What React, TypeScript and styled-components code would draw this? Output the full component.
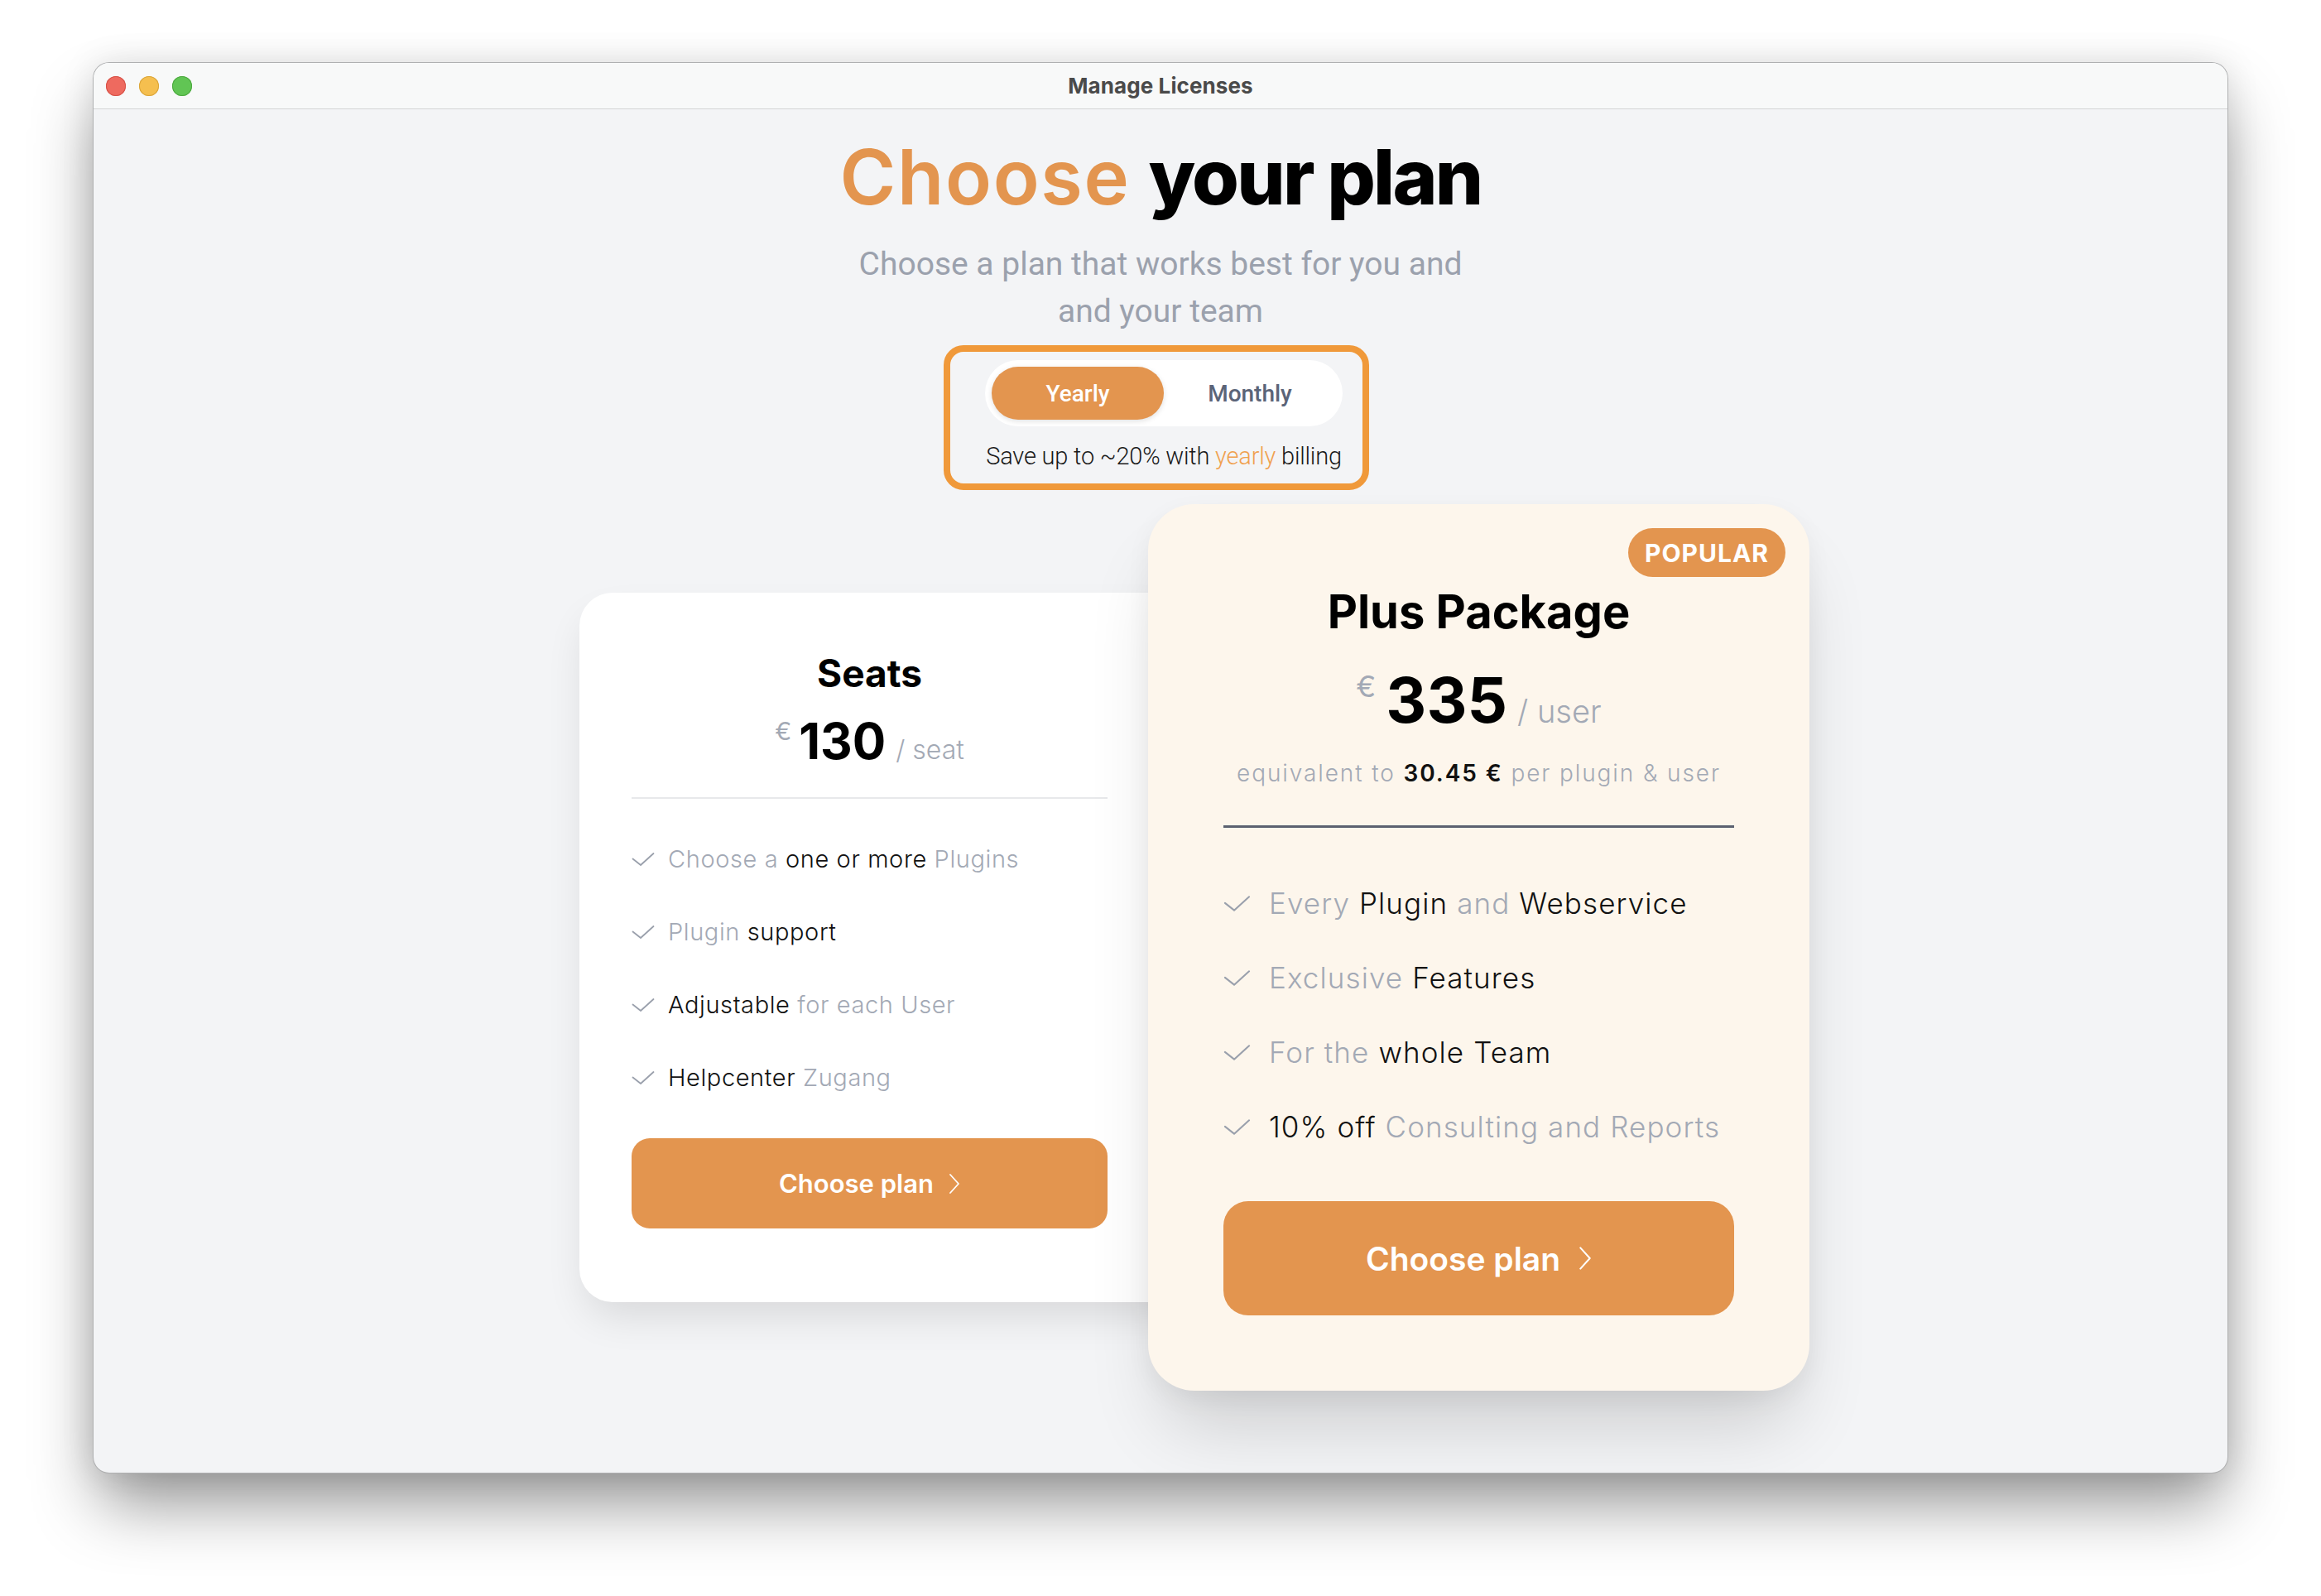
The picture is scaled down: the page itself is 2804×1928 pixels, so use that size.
import React from 'react';
import styled, { createGlobalStyle } from 'styled-components';

const ORANGE = '#e3954f';
const MUTED = '#a3a9b5';
const INK = '#111111';

const GlobalStyle = createGlobalStyle`
  html, body { margin: 0; padding: 0; background: #ffffff; }
  body { font-family: Inter, "Noto Sans", sans-serif; -webkit-font-smoothing: antialiased; }
  *, *::before, *::after { box-sizing: border-box; }
`;

const Stage = styled.div`
  width: 2804px;
  height: 1928px;
  display: flex;
  justify-content: center;
  align-items: flex-start;
  padding-top: 75px;
  background: #ffffff;
`;

const Window = styled.div`
  width: 2580px;
  height: 1705px;
  border-radius: 20px;
  background: #f3f4f6;
  border: 1px solid rgba(0, 0, 0, 0.28);
  box-shadow: 0 44px 80px -8px rgba(0, 0, 0, 0.42), 0 0 40px rgba(0, 0, 0, 0.1);
  overflow: hidden;
  display: flex;
  flex-direction: column;
`;

const TitleBar = styled.header`
  height: 56px;
  flex: none;
  background: #f8f9f9;
  border-bottom: 1px solid #d5d5d5;
  display: grid;
  grid-template-columns: 1fr auto 1fr;
  align-items: center;
  padding: 0 15px;
`;

const Lights = styled.div`
  display: flex;
  gap: 16px;
`;

const Light = styled.span<{ $fill: string; $edge: string }>`
  width: 24px;
  height: 24px;
  border-radius: 50%;
  background: ${(p) => p.$fill};
  box-shadow: inset 0 0 0 1px ${(p) => p.$edge};
`;

const WindowTitle = styled.div`
  font-size: 26px;
  font-weight: 700;
  color: #4a4a4a;
  letter-spacing: 0.1px;
`;

const Content = styled.main`
  flex: 1;
  display: flex;
  flex-direction: column;
  align-items: center;
`;

const Heading = styled.h1`
  margin: 36px 0 0;
  font-size: 92px;
  line-height: 1;
  font-weight: 800;
  letter-spacing: -0.03em;
  color: #000000;
`;

const Accent = styled.span`
  color: ${ORANGE};
  font-weight: 600;
  letter-spacing: 0.018em;
  margin-right: 0.05em;
`;

const Subtitle = styled.p`
  margin: 31px 0 0;
  font-family: Roboto, "Liberation Sans", sans-serif;
  font-size: 39px;
  line-height: 57px;
  color: #9ba1ad;
  text-align: center;
  letter-spacing: 0;
`;

const BillingBox = styled.div`
  margin: 12px 10px 0 0;
  border: 8px solid #f0993a;
  border-radius: 24px;
  padding: 10px 24px 15px 42px;
  display: flex;
  flex-direction: column;
  align-items: center;
  gap: 18px;
`;

const Toggle = styled.div`
  width: 432px;
  height: 80px;
  padding: 8px;
  border-radius: 40px;
  background: #ffffff;
  display: flex;
`;

const ToggleOption = styled.button<{ $active?: boolean }>`
  flex: 1;
  border: 0;
  border-radius: 32px;
  font-family: Roboto, "Liberation Sans", sans-serif;
  font-size: 28px;
  font-weight: 500;
  background: ${(p) => (p.$active ? ORANGE : 'transparent')};
  color: ${(p) => (p.$active ? '#ffffff' : '#5b6478')};
  box-shadow: ${(p) => (p.$active ? '0 2px 6px rgba(0,0,0,0.12)' : 'none')};
  cursor: pointer;
`;

const SaveNote = styled.p`
  margin: 0;
  font-family: Roboto, "Liberation Sans", sans-serif;
  font-size: 29px;
  line-height: 36px;
  font-weight: 300;
  color: #1a1a1a;
  letter-spacing: -0.2px;
  white-space: nowrap;
`;

const Highlight = styled.span`
  color: #f0a14f;
`;

const Plans = styled.div`
  margin-top: 17px;
  padding-left: 82px;
  display: flex;
  align-items: center;
`;

const Card = styled.section<{ $featured?: boolean }>`
  position: relative;
  z-index: ${(p) => (p.$featured ? 1 : 0)};
  width: ${(p) => (p.$featured ? 799 : 741)}px;
  margin-left: ${(p) => (p.$featured ? -54 : 0)}px;
  padding: ${(p) => (p.$featured ? '96px 91px 91px' : '69px 103px 89px 63px')};
  border-radius: ${(p) => (p.$featured ? 56 : 40)}px;
  background: ${(p) => (p.$featured ? '#fdf6ec' : '#ffffff')};
  box-shadow: ${(p) =>
    p.$featured
      ? '0 60px 90px -20px rgba(0,0,0,0.16), 0 10px 30px rgba(0,0,0,0.05)'
      : '0 24px 50px -10px rgba(0,0,0,0.12)'};
  display: flex;
  flex-direction: column;
`;

const Badge = styled.span`
  position: absolute;
  top: 29px;
  right: 29px;
  height: 59px;
  padding: 0 20px;
  border-radius: 30px;
  background: ${ORANGE};
  color: #ffffff;
  font-size: 30px;
  font-weight: 700;
  letter-spacing: 1px;
  display: flex;
  align-items: center;
`;

const PlanName = styled.h2<{ $featured?: boolean }>`
  margin: 0;
  text-align: center;
  font-size: ${(p) => (p.$featured ? 56 : 46)}px;
  line-height: ${(p) => (p.$featured ? 68 : 56)}px;
  font-weight: 700;
  color: #000000;
`;

const PriceRow = styled.div<{ $featured?: boolean }>`
  margin-top: ${(p) => (p.$featured ? 34 : 24)}px;
  display: flex;
  justify-content: center;
  align-items: baseline;
`;

const Currency = styled.span<{ $featured?: boolean }>`
  align-self: flex-start;
  margin: ${(p) => (p.$featured ? '4px 12px 0 0' : '3px 9px 0 0')};
  font-size: ${(p) => (p.$featured ? 36 : 30)}px;
  line-height: 1;
  font-weight: 400;
  color: ${MUTED};
`;

const Amount = styled.span<{ $featured?: boolean }>`
  font-size: ${(p) => (p.$featured ? 76 : 60)}px;
  line-height: 1;
  font-weight: 700;
  color: #000000;
`;

const Unit = styled.span<{ $featured?: boolean }>`
  margin-left: 12px;
  font-size: ${(p) => (p.$featured ? 38 : 32)}px;
  font-weight: 300;
  color: ${MUTED};
`;

const Equivalent = styled.p`
  margin: 31px 0 0;
  text-align: center;
  font-size: 28px;
  line-height: 40px;
  font-weight: 300;
  letter-spacing: 1.9px;
  color: ${MUTED};
  white-space: nowrap;
`;

const Strong = styled.strong`
  font-weight: 600;
  color: ${INK};
`;

const Divider = styled.hr<{ $featured?: boolean }>`
  margin: ${(p) => (p.$featured ? 43 : 38)}px 0 0;
  border: 0;
  height: ${(p) => (p.$featured ? 3 : 2)}px;
  background: ${(p) => (p.$featured ? '#5b6170' : '#e7e8eb')};
`;

const FeatureList = styled.ul<{ $featured?: boolean }>`
  list-style: none;
  margin: ${(p) => (p.$featured ? 67 : 53)}px 0 0;
  padding: 0;
  display: flex;
  flex-direction: column;
  gap: ${(p) => (p.$featured ? 42 : 48)}px;
`;

const Feature = styled.li<{ $featured?: boolean }>`
  display: flex;
  align-items: center;
  gap: ${(p) => (p.$featured ? 22 : 16)}px;
  font-size: ${(p) => (p.$featured ? 35 : 29)}px;
  line-height: ${(p) => (p.$featured ? 48 : 40)}px;
  font-weight: 300;
  letter-spacing: ${(p) => (p.$featured ? 1.1 : 0.6)}px;
  white-space: nowrap;
`;

const Part = styled.span<{ $tone: 'muted' | 'strong' }>`
  color: ${(p) => (p.$tone === 'muted' ? MUTED : INK)};
`;

const CheckIcon = styled.svg<{ $featured?: boolean }>`
  flex: none;
  width: ${(p) => (p.$featured ? 33 : 28)}px;
  height: ${(p) => (p.$featured ? 21 : 18)}px;
`;

const ChooseButton = styled.button<{ $featured?: boolean }>`
  margin-top: ${(p) => (p.$featured ? 66 : 53)}px;
  height: ${(p) => (p.$featured ? 138 : 109)}px;
  border: 0;
  border-radius: ${(p) => (p.$featured ? 30 : 22)}px;
  background: ${ORANGE};
  color: #ffffff;
  font-family: Inter, "Noto Sans", sans-serif;
  font-size: ${(p) => (p.$featured ? 39 : 31)}px;
  font-weight: 600;
  display: flex;
  align-items: center;
  justify-content: center;
  gap: ${(p) => (p.$featured ? 22 : 18)}px;
  cursor: pointer;
`;

const Chevron = styled.svg<{ $featured?: boolean }>`
  width: ${(p) => (p.$featured ? 16 : 14)}px;
  height: ${(p) => (p.$featured ? 30 : 26)}px;
`;

type Seg = [string, 'muted' | 'strong'];

const seatFeatures: Seg[][] = [
  [['Choose a', 'muted'], ['one or more', 'strong'], ['Plugins', 'muted']],
  [['Plugin', 'muted'], ['support', 'strong']],
  [['Adjustable', 'strong'], ['for each User', 'muted']],
  [['Helpcenter', 'strong'], ['Zugang', 'muted']],
];

const plusFeatures: Seg[][] = [
  [['Every', 'muted'], ['Plugin', 'strong'], ['and', 'muted'], ['Webservice', 'strong']],
  [['Exclusive', 'muted'], ['Features', 'strong']],
  [['For the', 'muted'], ['whole Team', 'strong']],
  [['10% off', 'strong'], ['Consulting and Reports', 'muted']],
];

function Check({ featured }: { featured?: boolean }) {
  return (
    <CheckIcon $featured={featured} viewBox="0 0 28 18" fill="none">
      <polyline
        points="1.5,8.5 11,16 26.5,2"
        stroke="#9aa0ac"
        strokeWidth="1.8"
        strokeLinecap="round"
        strokeLinejoin="round"
      />
    </CheckIcon>
  );
}

function Features({ items, featured }: { items: Seg[][]; featured?: boolean }) {
  return (
    <FeatureList $featured={featured}>
      {items.map((segs, i) => (
        <Feature key={i} $featured={featured}>
          <Check featured={featured} />
          <span>
            {segs.map(([text, tone], j) => (
              <React.Fragment key={j}>
                {j > 0 ? ' ' : ''}
                <Part $tone={tone}>{text}</Part>
              </React.Fragment>
            ))}
          </span>
        </Feature>
      ))}
    </FeatureList>
  );
}

function PlanButton({ featured }: { featured?: boolean }) {
  return (
    <ChooseButton $featured={featured}>
      Choose plan
      <Chevron $featured={featured} viewBox="0 0 14 26" fill="none">
        <polyline points="2,2 12,13 2,24" stroke="#ffffff" strokeWidth="1.8" strokeLinecap="round" strokeLinejoin="round" />
      </Chevron>
    </ChooseButton>
  );
}

export default function App() {
  return (
    <>
      <GlobalStyle />
      <Stage>
        <Window>
          <TitleBar>
            <Lights>
              <Light $fill="#ee6a5f" $edge="#d55147" />
              <Light $fill="#f5bf4f" $edge="#d9a43a" />
              <Light $fill="#61c554" $edge="#4ca83f" />
            </Lights>
            <WindowTitle>Manage Licenses</WindowTitle>
            <div />
          </TitleBar>
          <Content>
            <Heading>
              <Accent>Choose</Accent> your plan
            </Heading>
            <Subtitle>
              Choose a plan that works best for you and
              <br />
              and your team
            </Subtitle>
            <BillingBox>
              <Toggle>
                <ToggleOption $active>Yearly</ToggleOption>
                <ToggleOption>Monthly</ToggleOption>
              </Toggle>
              <SaveNote>
                Save up to ~20% with <Highlight>yearly</Highlight> billing
              </SaveNote>
            </BillingBox>
            <Plans>
              <Card>
                <PlanName>Seats</PlanName>
                <PriceRow>
                  <Currency>€</Currency>
                  <Amount>130</Amount>
                  <Unit>/ seat</Unit>
                </PriceRow>
                <Divider />
                <Features items={seatFeatures} />
                <PlanButton />
              </Card>
              <Card $featured>
                <Badge>POPULAR</Badge>
                <PlanName $featured>Plus Package</PlanName>
                <PriceRow $featured>
                  <Currency $featured>€</Currency>
                  <Amount $featured>335</Amount>
                  <Unit $featured>/ user</Unit>
                </PriceRow>
                <Equivalent>
                  equivalent to <Strong>30.45 €</Strong> per plugin &amp; user
                </Equivalent>
                <Divider $featured />
                <Features items={plusFeatures} featured />
                <PlanButton featured />
              </Card>
            </Plans>
          </Content>
        </Window>
      </Stage>
    </>
  );
}
